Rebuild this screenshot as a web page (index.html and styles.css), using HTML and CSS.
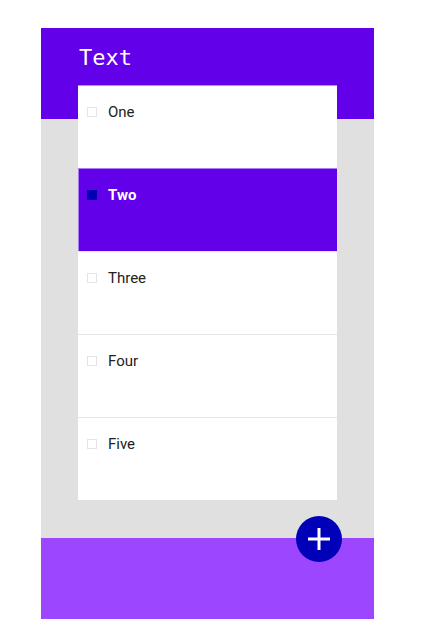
FILE: index.html
```html
<!DOCTYPE html>
<html>
<head>
<meta charset="utf-8">
<link rel="stylesheet" href="styles.css">
</head>
<body>
<div class="app">
  <header class="top-bar">
    <h1 class="title">Text</h1>
  </header>
  <main class="content">
    <ul class="list">
      <li class="item"><span class="check"></span><span class="label">One</span></li>
      <li class="item selected"><span class="check"></span><span class="label">Two</span></li>
      <li class="item"><span class="check"></span><span class="label">Three</span></li>
      <li class="item"><span class="check"></span><span class="label">Four</span></li>
      <li class="item"><span class="check"></span><span class="label">Five</span></li>
    </ul>
  </main>
  <footer class="bottom-bar">
    <button class="fab" aria-label="Add">
      <svg width="24" height="24" viewBox="0 0 24 24"><path d="M12 1v22M1 12h22" stroke="#fff" stroke-width="3" fill="none"/></svg>
    </button>
  </footer>
</div>
</body>
</html>
```
FILE: styles.css
```css
* { box-sizing: border-box; }
html, body { margin: 0; padding: 0; background: #fff; }
body { font-family: Roboto, "Noto Sans", sans-serif; }
.app {
  width: 333px;
  margin: 28px 0 0 41px;
  display: flex;
  flex-direction: column;
}
.top-bar {
  height: 91px;
  background: #6200ea;
  padding: 16px 0 0 38px;
}
.title {
  margin: 0;
  font-family: "DejaVu Sans Mono", "Liberation Mono", monospace;
  font-weight: normal;
  font-size: 22px;
  line-height: 28px;
  color: #fff;
}
.content {
  background: #e0e0e0;
  padding: 0 37px 38px 37px;
}
.list {
  list-style: none;
  margin: -34px 0 0 0;
  padding: 0;
  background: #fff;
}
.item {
  height: 83px;
  border-top: 1px solid #e6e6e6;
  padding: 16px 0 0 9px;
  display: flex;
  align-items: flex-start;
  gap: 11px;
  background: #fff;
}
.item:first-child { border-top: 1px solid #b38cf5; }
.check {
  width: 10px;
  height: 10px;
  margin-top: 5px;
  border: 1px solid #e4e4e4;
  background: #fff;
  flex: none;
}
.label {
  font-size: 15px;
  line-height: 20px;
  color: #222;
}
.item.selected {
  background: #6200ea;
  border-top: 1px solid #a77df0;
  border-left: 1px solid #a77df0;
  padding-left: 8px;
}
.item.selected .check {
  background: #0000b0;
  border-color: #0000b0;
}
.item.selected .label {
  color: #fff;
  font-weight: bold;
}
.bottom-bar {
  height: 81px;
  background: #9c47ff;
  position: relative;
}
.fab {
  position: absolute;
  left: 255px;
  top: -22px;
  width: 46px;
  height: 46px;
  border-radius: 50%;
  border: none;
  padding: 0;
  background: #0000b8;
  display: flex;
  align-items: center;
  justify-content: center;
}
```
